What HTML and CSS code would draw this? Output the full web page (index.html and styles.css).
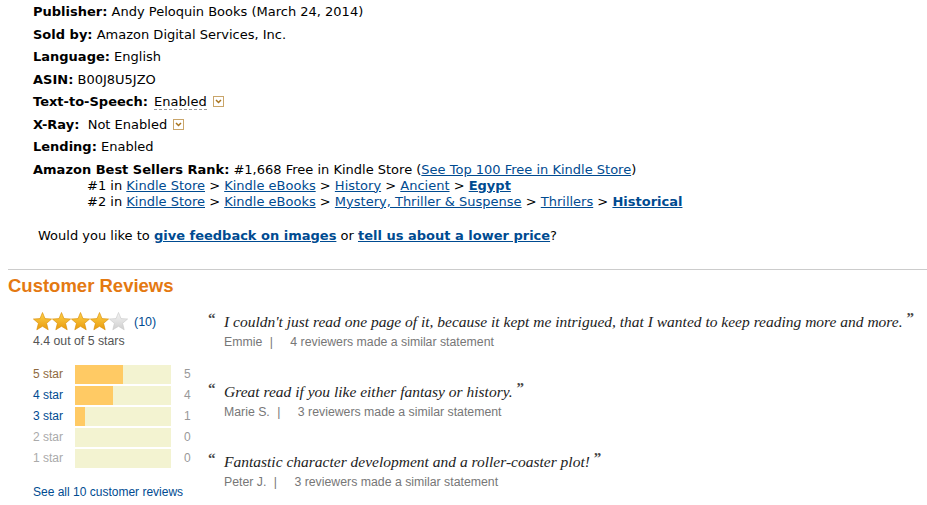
FILE: index.html
```html
<!DOCTYPE html>
<html>
<head>
<meta charset="utf-8">
<link rel="stylesheet" href="styles.css">
</head>
<body>
<div class="details">
  <ul class="facts">
    <li><b>Publisher:</b> Andy Peloquin Books (March 24, 2014)</li>
    <li><b>Sold by:</b> Amazon Digital Services, Inc.</li>
    <li><b>Language:</b> English</li>
    <li><b>ASIN:</b> B00J8U5JZO</li>
    <li><b>Text-to-Speech:</b> <span class="dashed">Enabled</span> <span class="dd"><svg viewBox="0 0 11 11" width="11" height="11"><rect x="0.5" y="0.5" width="10" height="10" fill="#fff" stroke="#c9a56a"/><path d="M3 4 L5.5 6.5 L8 4" fill="none" stroke="#a8741f" stroke-width="1.5"/></svg></span></li>
    <li><b>X-Ray:</b>&nbsp; Not Enabled <span class="dd"><svg viewBox="0 0 11 11" width="11" height="11"><rect x="0.5" y="0.5" width="10" height="10" fill="#fff" stroke="#c9a56a"/><path d="M3 4 L5.5 6.5 L8 4" fill="none" stroke="#a8741f" stroke-width="1.5"/></svg></span></li>
    <li><b>Lending:</b> Enabled</li>
    <li class="rank">
      <div><b>Amazon Best Sellers Rank:</b> #1,668 Free in Kindle Store (<a href="#">See Top 100 Free in Kindle Store</a>)</div>
      <div class="sub">#1 in <a href="#">Kindle Store</a> &gt; <a href="#">Kindle eBooks</a> &gt; <a href="#">History</a> &gt; <a href="#">Ancient</a> &gt; <a href="#"><b>Egypt</b></a></div>
      <div class="sub">#2 in <a href="#">Kindle Store</a> &gt; <a href="#">Kindle eBooks</a> &gt; <a href="#">Mystery, Thriller &amp; Suspense</a> &gt; <a href="#">Thrillers</a> &gt; <a href="#"><b>Historical</b></a></div>
    </li>
  </ul>
  <p class="feedback">Would you like to <a href="#"><b>give feedback on images</b></a> or <a href="#"><b>tell us about a lower price</b></a>?</p>
</div>
<hr class="rule">
<section class="reviews">
  <h2>Customer Reviews</h2>
  <div class="rev-grid">
    <div class="summary">
      <div class="stars-line">
        <svg class="stars" width="96" height="19" viewBox="0 0 96 19">
          <defs>
            <linearGradient id="g" x1="0" y1="0" x2="0" y2="1">
              <stop offset="0" stop-color="#ffd24a"/>
              <stop offset="1" stop-color="#e89a0c"/>
            </linearGradient>
            <linearGradient id="e" x1="0" y1="0" x2="0" y2="1">
              <stop offset="0" stop-color="#f4f4f4"/>
              <stop offset="1" stop-color="#cfcfcf"/>
            </linearGradient>
            <path id="s" d="M9.5 0.5 L12 6.6 L18.6 7 L13.6 11.3 L15.2 17.8 L9.5 14.3 L3.8 17.8 L5.4 11.3 L0.4 7 L7 6.6 Z"/>
            <clipPath id="half"><rect x="76" y="0" width="9" height="19"/></clipPath>
          </defs>
          <use href="#s" x="0" fill="url(#g)" stroke="#d68a00" stroke-width="0.6"/>
          <use href="#s" x="19" fill="url(#g)" stroke="#d68a00" stroke-width="0.6"/>
          <use href="#s" x="38" fill="url(#g)" stroke="#d68a00" stroke-width="0.6"/>
          <use href="#s" x="57" fill="url(#g)" stroke="#d68a00" stroke-width="0.6"/>
          <use href="#s" x="76" fill="url(#e)" stroke="#c8c8c8" stroke-width="0.6"/>
          <use href="#s" x="76" fill="url(#g)" stroke="#d68a00" stroke-width="0.6" clip-path="url(#half)"/>
        </svg>
        <a href="#" class="count">(10)</a>
      </div>
      <div class="avg">4.4 out of 5 stars</div>
      <table class="hist">
        <tr class="hl"><td class="lbl">5 star</td><td><div class="bar"><div class="fill" style="width:50%"></div></div></td><td class="num">5</td></tr>
        <tr class="on"><td class="lbl">4 star</td><td><div class="bar"><div class="fill" style="width:40%"></div></div></td><td class="num">4</td></tr>
        <tr class="on"><td class="lbl">3 star</td><td><div class="bar"><div class="fill" style="width:10%"></div></div></td><td class="num">1</td></tr>
        <tr class="off"><td class="lbl">2 star</td><td><div class="bar"></div></td><td class="num">0</td></tr>
        <tr class="off"><td class="lbl">1 star</td><td><div class="bar"></div></td><td class="num">0</td></tr>
      </table>
      <a href="#" class="see-all">See all 10 customer reviews</a>
    </div>
    <div class="quotes">
      <div class="quote">
        <div class="qtext"><span class="qm open">&ldquo;</span>I couldn't just read one page of it, because it kept me intrigued, that I wanted to keep reading more and more. <span class="qm">&rdquo;</span></div>
        <div class="attr">Emmie <span class="sep">|</span> 4 reviewers made a similar statement</div>
      </div>
      <div class="quote">
        <div class="qtext"><span class="qm open">&ldquo;</span>Great read if you like either fantasy or history. <span class="qm">&rdquo;</span></div>
        <div class="attr">Marie S. <span class="sep">|</span> 3 reviewers made a similar statement</div>
      </div>
      <div class="quote">
        <div class="qtext"><span class="qm open">&ldquo;</span>Fantastic character development and a roller-coaster plot! <span class="qm">&rdquo;</span></div>
        <div class="attr">Peter J. <span class="sep">|</span> 3 reviewers made a similar statement</div>
      </div>
    </div>
  </div>
</section>
</body>
</html>
```
FILE: styles.css
```css
html, body {
  margin: 0;
  padding: 0;
  background: #fff;
}
body {
  font-family: "DejaVu Sans", Verdana, sans-serif;
  font-size: 13px;
  color: #000;
  width: 927px;
  height: 505px;
  overflow: hidden;
}
a {
  color: #004b91;
  text-decoration: underline;
}
.details {
  padding: 1px 0 0 33px;
}
.facts {
  list-style: none;
  margin: 0;
  padding: 0;
}
.facts li {
  line-height: 22.5px;
  height: 22.5px;
}
.dashed {
  border-bottom: 1px dashed #999;
  margin-left: 2px;
}
.dd {
  display: inline-block;
  vertical-align: -1px;
  line-height: 0;
  margin-left: 2px;
}
.facts li.rank {
  height: auto;
}
.rank div {
  line-height: 16px;
}
.rank > div:first-child {
  line-height: 22px;
  margin-bottom: -3px;
}
.rank .sub {
  padding-left: 54px;
}
.feedback {
  margin: 18px 0 0 5px;
  line-height: 16px;
}
.rule {
  margin: 25px 0 0 8px;
  border: 0;
  border-top: 1px solid #ccc;
  height: 0;
}
.reviews {
  padding: 0 0 0 8px;
  font-family: "Liberation Sans", Arial, sans-serif;
  font-size: 12px;
}
.reviews h2 {
  margin: 6px 0 0;
  font-size: 18.5px;
  line-height: 20px;
  color: #e47911;
  font-weight: bold;
}
.rev-grid {
  display: grid;
  grid-template-columns: 200px 1fr;
  margin-top: 15px;
}
.summary {
  padding-left: 25px;
}
.stars-line {
  display: flex;
  align-items: center;
  gap: 5px;
  height: 22px;
}
.stars {
  display: block;
}
.count {
  text-decoration: none;
  font-size: 12.5px;
}
.avg {
  color: #555;
  font-size: 12.3px;
  line-height: 15px;
  margin-top: 1px;
}
.hist {
  border-collapse: separate;
  border-spacing: 0 2px;
  margin-top: 14px;
}
.hist td {
  padding: 0;
  height: 19px;
  line-height: 19px;
}
.lbl {
  width: 42px;
}
.hl .lbl { color: #8f6a3e; }
.on .lbl { color: #004b91; }
.off .lbl { color: #aaa; }
.num {
  color: #999;
  padding-left: 13px !important;
}
.bar {
  width: 96px;
  height: 19px;
  background: #f3f3d1;
  display: flex;
}
.fill {
  background: #ffca64;
  height: 100%;
}
.see-all {
  display: block;
  margin-top: 15px;
  text-decoration: none;
  line-height: 15px;
}
.quotes {
  margin-top: -3px;
}
.quote {
  height: 70px;
}
.qtext {
  font-family: "Liberation Serif", "Times New Roman", serif;
  font-style: italic;
  font-size: 15.5px;
  line-height: 20px;
  color: #222;
}
.qm {
  font-style: normal;
  font-weight: bold;
  font-size: 15px;
  color: #444;
  vertical-align: 4px;
}
.qm.open {
  display: inline-block;
  width: 16px;
}
.attr {
  color: #777;
  font-size: 12.3px;
  padding-left: 16px;
  line-height: 16px;
  margin-top: 2px;
}
.sep {
  margin: 0 14px 0 4px;
}
```
